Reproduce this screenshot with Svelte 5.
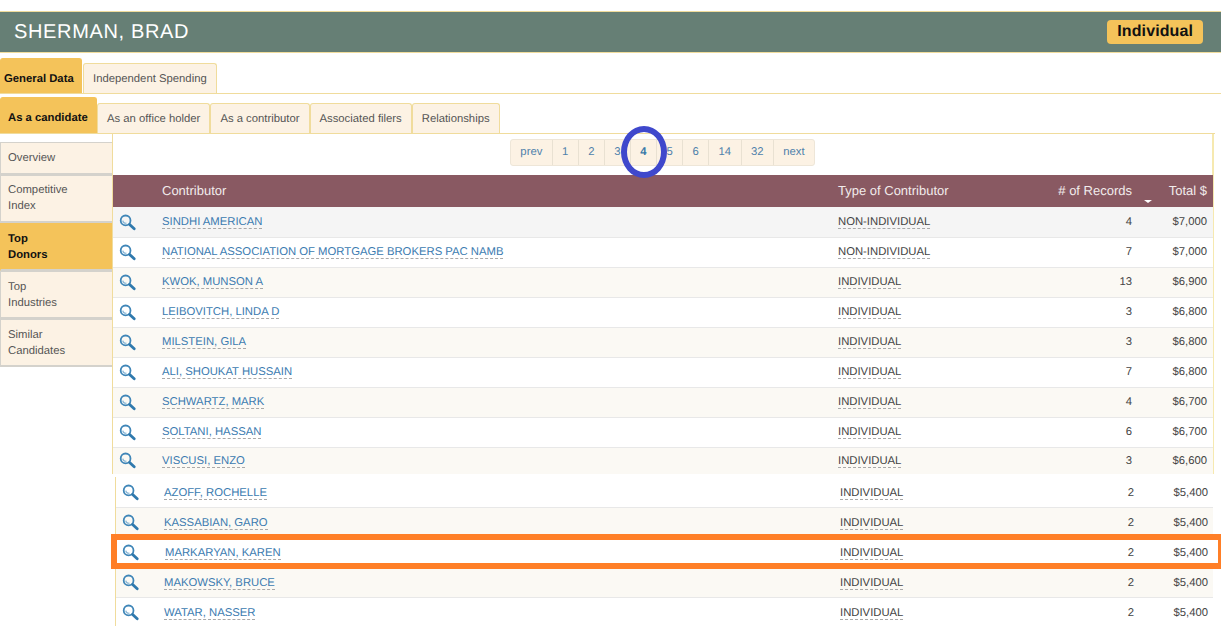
<script lang="ts">
  const topRows = [
    ["SINDHI AMERICAN", "NON-INDIVIDUAL", 4, "$7,000"],
    ["NATIONAL ASSOCIATION OF MORTGAGE BROKERS PAC NAMB", "NON-INDIVIDUAL", 7, "$7,000"],
    ["KWOK, MUNSON A", "INDIVIDUAL", 13, "$6,900"],
    ["LEIBOVITCH, LINDA D", "INDIVIDUAL", 3, "$6,800"],
    ["MILSTEIN, GILA", "INDIVIDUAL", 3, "$6,800"],
    ["ALI, SHOUKAT HUSSAIN", "INDIVIDUAL", 7, "$6,800"],
    ["SCHWARTZ, MARK", "INDIVIDUAL", 4, "$6,700"],
    ["SOLTANI, HASSAN", "INDIVIDUAL", 6, "$6,700"],
    ["VISCUSI, ENZO", "INDIVIDUAL", 3, "$6,600"],
  ];
  const lowerRows = [
    ["AZOFF, ROCHELLE", "INDIVIDUAL", 2, "$5,400"],
    ["KASSABIAN, GARO", "INDIVIDUAL", 2, "$5,400"],
    ["MARKARYAN, KAREN", "INDIVIDUAL", 2, "$5,400"],
    ["MAKOWSKY, BRUCE", "INDIVIDUAL", 2, "$5,400"],
    ["WATAR, NASSER", "INDIVIDUAL", 2, "$5,400"],
  ];
  const pages = ["prev", "1", "2", "3", "4", "5", "6", "14", "32", "next"];
  const topTabs = ["As an office holder", "As a contributor", "Associated filers", "Relationships"];
  const side = [
    { label: ["Overview"] },
    { label: ["Competitive", "Index"], tight: true },
    { label: ["Top", "Donors"], active: true },
    { label: ["Top", "Industries"] },
    { label: ["Similar", "Candidates"] },
  ];
</script>

{#snippet lens()}
  <svg class="lens" width="17" height="17" viewBox="0 0 17 17" fill="none">
    <circle cx="6.6" cy="6.4" r="4.9" stroke="#3f86b8" stroke-width="1.8" />
    <path d="M3.8 6.6a3 3 0 0 0 3.6 2.6" stroke="#7fb0d2" stroke-width="1.2" />
    <path d="M10.6 10.4l4.6 4.4" stroke="#2f79ad" stroke-width="2.8" stroke-linecap="round" />
  </svg>
{/snippet}

{#snippet row(r, i)}
  <div class="row" class:cream={i % 2 === 0}>
    <span class="icon">{@render lens()}</span>
    <span><a href="#top" class="name" class:nudge={r[0] === "MARKARYAN, KAREN"}>{r[0]}</a></span>
    <span><span class="type">{r[1]}</span></span>
    <span class="num">{r[2]}</span>
    <span class="num">{r[3]}</span>
  </div>
{/snippet}

<div class="page">
  <header class="head">
    <h1>SHERMAN, BRAD</h1>
    <span class="badge">Individual</span>
  </header>

  <nav class="tabs first">
    <span class="tab on">General Data</span>
    <span class="tab">Independent Spending</span>
  </nav>

  <nav class="tabs second">
    <span class="tab on">As a candidate</span>
    {#each topTabs as t}
      <span class="tab">{t}</span>
    {/each}
  </nav>

  <div class="body">
    <aside class="side">
      {#each side as s}
        <div class="side-item" class:on={s.active} class:tight={s.tight}>
          {#each s.label as l}<div>{l}</div>{/each}
        </div>
      {/each}
    </aside>

    <main class="main">
      <div class="panel">
        <div class="pager-wrap">
          <div class="pager">
            {#each pages as p}
              <span class="page-link" class:cur={p === "4"}>{p}</span>
            {/each}
          </div>
        </div>
        <div class="row thead">
          <span></span>
          <span>Contributor</span>
          <span>Type of Contributor</span>
          <span class="num">
            # of Records
            <i class="caret"></i>
          </span>
          <span class="num">Total $</span>
        </div>
        <div class="row first-row">
          <span class="icon">{@render lens()}</span>
          <span><a href="#top" class="name">{topRows[0][0]}</a></span>
          <span><span class="type">{topRows[0][1]}</span></span>
          <span class="num">{topRows[0][2]}</span>
          <span class="num">{topRows[0][3]}</span>
        </div>
        {#each topRows.slice(1) as r, i}
          {@render row(r, i + 1)}
        {/each}
      </div>

      <div class="lower">
        {#each lowerRows as r, i}
          {@render row(r, i + 1)}
        {/each}
      </div>
    </main>
  </div>

  <div class="mark-row"></div>
  <div class="mark-page"></div>
</div>

<style>
  :global(body) {
    margin: 0;
    background: #fff;
    font-family: "Liberation Sans", Arial, sans-serif;
    font-size: 11.3px;
    color: #444;
    text-rendering: geometricPrecision;
  }

  .page {
    position: relative;
    width: 1221px;
    height: 636px;
    padding-top: 11px;
    box-sizing: border-box;
    overflow: hidden;
  }

  .head {
    height: 40px;
    display: flex;
    align-items: center;
    justify-content: space-between;
    padding: 0 18px 0 14px;
    background: #667f75;
    border-top: 1px solid #f0dc9c;
    border-bottom: 1px solid #f0dc9c;
  }

  h1 {
    margin: 0;
    font-size: 20px;
    font-weight: 400;
    letter-spacing: 0.65px;
    color: #fff;
  }

  .badge {
    height: 24px;
    line-height: 23px;
    padding: 0 10px;
    border-radius: 4px;
    background: #f4c35a;
    color: #111;
    font-size: 16px;
    font-weight: 700;
    letter-spacing: 0.1px;
  }

  .tabs {
    display: flex;
    align-items: flex-end;
    border-bottom: 1px solid #f0dc9c;
    box-sizing: border-box;
  }

  .first {
    height: 36px;
    margin-top: 5px;
  }

  .second {
    width: 1215px;
    height: 37px;
    margin-top: 3px;
  }

  .tab {
    height: 30px;
    line-height: 30px;
    padding: 0 9px;
    box-sizing: border-box;
    background: #fcf2e4;
    border: 1px solid #f0dc9c;
    border-bottom: 0;
    border-radius: 3px 3px 0 0;
    color: #555;
    white-space: nowrap;
  }

  .tab.on {
    height: 35px;
    line-height: 40px;
    background: #f4c35a;
    border-color: #f4c35a;
    color: #111;
    font-weight: 700;
  }

  .first .tab.on {
    width: 82px;
    margin-right: 1px;
    padding: 0 0 0 3px;
  }

  .second .tab.on {
    width: 97px;
    height: 36px;
    padding: 0 0 0 7px;
  }

  .body {
    display: flex;
    align-items: flex-start;
  }

  .side {
    width: 112px;
    margin-top: 8px;
    flex: none;
  }

  .side-item {
    padding: 7px 6px 6px 7px;
    line-height: 16px;
    background: #fcf2e4;
    border: 1px solid #d4d2cc;
    border-width: 1px 0 2px 1px;
    color: #555;
  }

  .side-item:first-child {
    padding-bottom: 7px;
  }

  .side-item.tight {
    padding-top: 6px;
    padding-bottom: 7px;
  }

  .side-item.on {
    background: #f4c35a;
    color: #111;
    font-weight: 700;
    border-top-color: #f4c35a;
    border-left-color: #f4c35a;
  }

  .main {
    flex: 1;
    min-width: 0;
  }

  .panel {
    width: 1102px;
    box-sizing: border-box;
    border-right: 2px solid #f6e9b0;
    border-left: 1px solid #f0dc9c;
  }

  .pager-wrap {
    height: 41px;
    display: flex;
    justify-content: center;
    box-sizing: border-box;
  }

  .pager {
    height: 27px;
    margin-top: 5px;
    display: flex;
    background: #fcf2e4;
    border: 1px solid #eee6d8;
    border-radius: 3px;
    box-sizing: border-box;
  }

  .page-link {
    padding: 0 9.4px;
    line-height: 25px;
    color: #4f81ab;
    border-left: 1px solid #e9e1d2;
  }

  .page-link:first-child {
    border-left: 0;
  }

  .page-link.cur {
    font-weight: 700;
    color: #3a7aa8;
  }

  .row {
    display: grid;
    grid-template-columns: 49px 676px 196px 98px 75px;
    width: 1100px;
    height: 30px;
    padding-right: 6px;
    padding-bottom: 1px;
    box-sizing: border-box;
    align-items: center;
    border-top: 1px solid #e8e8e8;
    background: #fff;
    line-height: 16px;
  }

  .row.cream {
    background: #fbf9f4;
  }

  .panel .row:last-child {
    height: 27px;
  }

  .first-row {
    background: #f5f5f5;
    border-top: 0;
    padding-bottom: 0;
  }

  .thead {
    height: 32px;
    background: #895962;
    border-top: 0;
    padding-bottom: 0;
    color: #f2ecec;
    font-size: 13px;
  }

  .num {
    position: relative;
    text-align: right;
  }

  .caret {
    position: absolute;
    right: -20px;
    top: 17px;
    border: 4px solid transparent;
    border-top: 3px solid #fff;
    border-bottom: 0;
  }

  .icon {
    display: flex;
    padding-left: 6px;
  }

  .name {
    color: #3b7bb0;
    text-decoration: none;
    border-bottom: 1px dashed #a9a9a9;
  }

  .name.nudge {
    margin-left: 1px;
  }

  .type {
    border-bottom: 1px dashed #a9a9a9;
  }

  .lower {
    width: 1098px;
    height: 149px;
    margin-top: 3px;
    margin-left: 3px;
    border-left: 1px solid #f0dc9c;
    box-sizing: border-box;
    overflow: hidden;
  }

  .lower .row {
    width: 1097px;
    padding-right: 5px;
    padding-bottom: 0;
    grid-template-columns: 48px 676px 196px 98px 74px;
  }

  .lower .row:first-child {
    border-top: 0;
    padding-top: 1px;
  }

  .mark-row {
    position: absolute;
    left: 111px;
    top: 534px;
    width: 1113px;
    height: 35px;
    box-sizing: border-box;
    border: 6px solid #ff7f27;
  }

  .mark-page {
    position: absolute;
    left: 621px;
    top: 126px;
    width: 46px;
    height: 52px;
    box-sizing: border-box;
    border: 6px solid #3f48cc;
    border-radius: 50%;
  }
</style>
